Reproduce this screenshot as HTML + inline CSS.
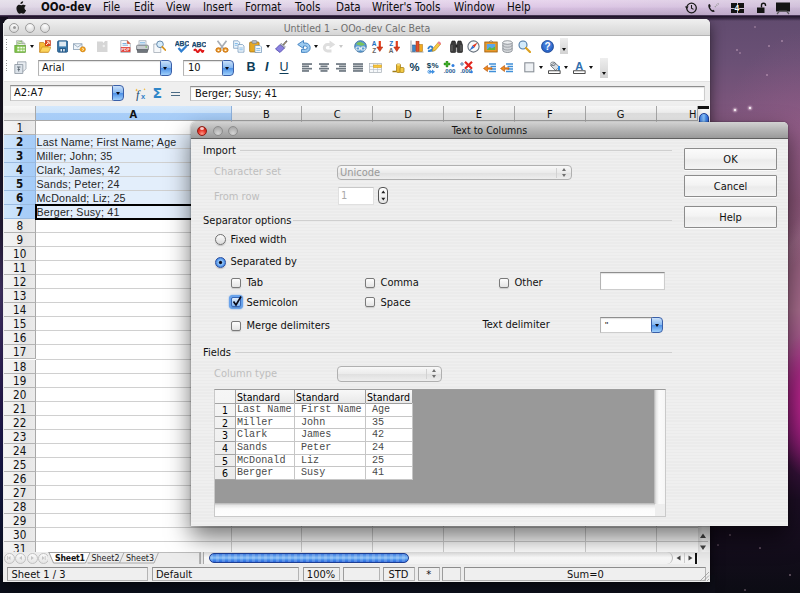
<!DOCTYPE html>
<html>
<head>
<meta charset="utf-8">
<title>Text to Columns</title>
<style>
*{box-sizing:border-box;margin:0;padding:0}
html,body{width:800px;height:593px;overflow:hidden}
body{position:relative;font-family:"DejaVu Sans Condensed","Liberation Sans",sans-serif;font-size:11px;color:#111;background:#120e1c}
.a{position:absolute;white-space:nowrap}
#desk{position:absolute;left:0;top:0;width:800px;height:593px;
 background:
  linear-gradient(128deg,rgba(255,255,255,0) 0,rgba(255,255,255,0) 762px,rgba(255,240,250,.07) 775px,rgba(255,255,255,0) 790px),
  radial-gradient(ellipse 90px 120px at 810px 150px, rgba(170,100,150,.38), rgba(150,90,140,0) 100%),
  radial-gradient(ellipse 38px 75px at 812px 405px, rgba(205,40,150,.95), rgba(175,32,132,.6) 55%, rgba(120,26,100,0) 100%),
  linear-gradient(180deg,#5d496c 0px,#6a5075 60px,#85587f 130px,#80506f 200px,#96607f 260px,#a86c8d 310px,#a4508c 355px,#8e2478 395px,#6c1a66 430px,#3c123e 462px,#1c0e24 500px,#0c0c14 593px)}
#deskL{position:absolute;left:0;top:17px;width:8px;height:576px;background:linear-gradient(180deg,#151320 0,#1a1528 130px,#2a2040 215px,#4a3a72 275px,#3c2c68 325px,#2a1c58 385px,#1c1a55 435px,#141a45 485px,#0c1428 545px,#0a0e18 576px)}
#deskB{position:absolute;left:0;top:575px;width:715px;height:18px;background:linear-gradient(90deg,#0a0e1a 0,#0c1220 300px,#0e0e18 715px)}
#menubar{position:absolute;left:0;top:0;width:800px;height:15.500px;
 background:linear-gradient(90deg,rgba(228,226,232,.55) 0,rgba(225,218,230,.3) 30%,rgba(226,190,232,.35) 70%,rgba(190,170,200,.35) 100%),linear-gradient(180deg,#ebe2f0 0,#dccde5 45%,#cdbcd8 58%,#bba9c7 100%);
 border-bottom:1px solid #4a3858;font-size:11.5px}
#menubar span{position:absolute;top:0.300px;line-height:14px;color:#0c0c0c;white-space:nowrap}
#mbshadow{position:absolute;left:0;top:15.500px;width:800px;height:5px;background:linear-gradient(180deg,rgba(20,10,30,.85),rgba(20,10,30,.5) 50%,rgba(20,10,30,0))}
#win{position:absolute;left:4px;top:19px;width:706px;height:563px;background:#fff;border-radius:5px 5px 0 0;box-shadow:0 5px 14px rgba(0,0,0,.6),0 0 1px rgba(0,0,0,.6)}
#winin{position:absolute;left:0;top:0;width:706px;height:563px;overflow:hidden;border-radius:5px 5px 0 0}
#wtitle{position:absolute;left:0;top:0;width:706px;height:16.500px;background:linear-gradient(180deg,#f0f0f0,#d6d6d6);
 border-bottom:1px solid #b4b4b4;text-align:center;line-height:18px;color:#707070;font-size:10.5px}
.tl{position:absolute;width:10px;height:10px;border-radius:50%;border:1px solid #9c9c9c;background:radial-gradient(circle at 50% 25%,#fdfdfd,#d0d0d0)}
.tlg{position:absolute;width:10px;height:10px;border-radius:50%;border:1px solid #8e8e8e;background:radial-gradient(circle at 50% 80%,#d4d4d4,#9e9e9e)}
.tlr{position:absolute;width:10px;height:10px;border-radius:50%;border:1px solid #8e1c14;background:radial-gradient(circle at 50% 85%,#ff9a8a 0,#e8392c 45%,#b5160f 100%)}
.tlr:after{content:"";position:absolute;left:2px;top:0.5px;width:4px;height:3px;border-radius:50%;background:rgba(255,255,255,.75)}
#tools{position:absolute;left:0;top:17px;width:706px;height:45px;background:#fff}
#fbar{position:absolute;left:0;top:62px;width:706px;height:25px;background:#efefef;border-top:1px solid #e2e2e2}
.ibox{position:absolute;background:#fff;border:1px solid #cdcdcd;border-top:1px solid #8e8e8e;border-left-color:#b4b4b4;box-shadow:inset 0 1px 1px rgba(0,0,0,.12);font-size:11px;line-height:13px;padding-left:4px;white-space:nowrap;overflow:hidden}
.cb{position:absolute;width:12px;height:16px;border-radius:1.500px 4px 4px 1.500px;border:1px solid #3a5fa8;
 background:linear-gradient(180deg,#c9e0fa 0,#86b8f0 48%,#4d90e6 52%,#9fd0fb 100%)}
.cb:after{content:"";position:absolute;left:2.5px;top:6px;border:2.5px solid transparent;border-top:3.5px solid #0a0a14;border-bottom:0}
.ic{position:absolute;width:14px;height:14px}
.dd{position:absolute;width:0;height:0;border:2.5px solid transparent;border-top:3px solid #111;border-bottom:0}
.grip{position:absolute;width:1px;height:13px;background:repeating-linear-gradient(180deg,#999 0,#999 1px,transparent 1px,transparent 2.6px)}
.ovf{position:absolute;width:8px;background:linear-gradient(180deg,#eee,#d2d2d2)}
.ovf:after{content:"";position:absolute;left:1.5px;bottom:2.5px;border:2.5px solid transparent;border-top:3px solid #111;border-bottom:0}
/* grid */
#grid{position:absolute;left:0;top:87px;width:706px;height:446px;background:#fff;overflow:hidden}
.ch{position:absolute;top:0;height:15px;background:linear-gradient(180deg,#f7f7f7 0,#efefef 50%,#e2e2e2 52%,#ebebeb 100%);border-right:1px solid #a8a8a8;border-bottom:1px solid #a8a8a8;text-align:center;font-size:11px;line-height:17px}
.rh{position:absolute;left:0;width:31.500px;padding-left:1px;background:linear-gradient(90deg,#f4f4f4 0,#efefef 50%,#e4e4e4 52%,#ebebeb 100%);border-right:1px solid #a8a8a8;border-bottom:1px solid #b4b4b4;text-align:center;font-size:11.600px}
.hl{position:absolute;background:#d0d0d0}
.vl{position:absolute;background:#d0d0d0;width:1px}
.ct{position:absolute;left:32.500px;font-family:"Liberation Sans",sans-serif;font-size:10.700px;letter-spacing:.22px;color:#262626;white-space:nowrap;margin-top:-.5px}
/* dialog */
#dlg{position:absolute;left:191px;top:122px;width:597px;height:404px;border-radius:5px 5px 0 0;
 box-shadow:0 11px 24px rgba(0,0,0,.55),0 0 2px rgba(0,0,0,.5);
 background:repeating-linear-gradient(180deg,#efefef 0,#efefef 1.6px,#ebebeb 1.6px,#ebebeb 3.125px)}
#dtitle{position:absolute;left:0;top:0;width:597px;height:16.5px;border-radius:5px 5px 0 0;background:linear-gradient(180deg,#d2d2d2 0,#b4b4b4 50%,#9a9a9a 100%);
 border-bottom:1px solid #5f5f5f;text-align:center;line-height:17.500px;font-size:10.5px;color:#141414}
.lb{position:absolute;white-space:nowrap;font-size:11px;line-height:13px;color:#111}
.dis{color:#bebebe}
.sep{position:absolute;height:1px;background:#cfcfcf;border-bottom:0}
.btn{position:absolute;left:493px;width:93px;height:22px;border:1px solid #8c8c8c;border-radius:1px;background:linear-gradient(180deg,#fbfbfb 0,#f3f3f3 45%,#ebebeb 55%,#f3f3f3 100%);
 text-align:center;line-height:21.500px;font-size:11px;box-shadow:0 1px 0 rgba(255,255,255,.8)}
.chk{position:absolute;width:10px;height:10px;border:1px solid #7a7a7a;border-radius:2px;background:linear-gradient(180deg,#fdfdfd,#e4e4e4);box-shadow:0 1px 1px rgba(0,0,0,.15)}
.rad{position:absolute;width:11px;height:11px;border:1px solid #707070;border-radius:50%;background:linear-gradient(180deg,#fbfbfb,#dcdcdc);box-shadow:0 1px 1px rgba(0,0,0,.18)}
.pop{position:absolute;height:15.500px;border:1px solid #b0b0b0;border-radius:4px;background:linear-gradient(180deg,#f8f8f8 0,#ebebeb 50%,#e0e0e0 52%,#eeeeee 100%);font-size:11px;line-height:14px;padding-left:2px;color:#9a9a9a}
.pop i{position:absolute;right:14px;top:2px;width:1px;height:10px;background:#d2d2d2}
.pop b{position:absolute;right:5.500px;width:0;height:0;border:2px solid transparent}
.pop b.u{top:2px;border-bottom:3px solid #6f6f6f;border-top:0}
.pop b.d{top:8px;border-top:3px solid #6f6f6f;border-bottom:0}
#pv{position:absolute;left:23px;top:267px;width:452px;height:127.500px;background:#fff;border:1px solid #c9c9c9;border-top-color:#9c9c9c}
#pvg{position:absolute;left:0;top:0;width:440px;height:114px;background:#999}
.pc{position:absolute;background:#fff;border-right:1px solid #c4c4c4;border-bottom:1px solid #c4c4c4;font-family:"Liberation Mono",monospace;font-size:10.100px;line-height:11.5px;color:#4a4a4a;white-space:nowrap;overflow:hidden}
.ph{position:absolute;background:linear-gradient(180deg,#f6f6f6,#e6e6e6);border-right:1px solid #999;border-bottom:1px solid #999;font-size:10.5px;line-height:11.5px;white-space:nowrap;overflow:hidden;color:#000}
</style>
</head>
<body>
<div id="desk"></div><div id="deskL"></div><div id="deskB"></div>
<div class="a" style="left:733.6px;top:108.6px;width:2.8px;height:2.8px;border-radius:50%;background:#fff;box-shadow:0 0 2px 1px rgba(255,230,245,.7)"></div>
<div class="a" style="left:749px;top:107px;width:2px;height:2px;border-radius:50%;background:#fff;box-shadow:0 0 2px 1px rgba(255,230,245,.7)"></div>
<div class="a" style="left:736.2px;top:49.2px;width:1.6px;height:1.6px;border-radius:50%;background:rgba(255,215,235,0.35)"></div>
<div class="a" style="left:768.2px;top:45.2px;width:1.6px;height:1.6px;border-radius:50%;background:rgba(255,215,235,0.35)"></div>
<div class="a" style="left:781.3px;top:40.3px;width:1.4px;height:1.4px;border-radius:50%;background:rgba(255,215,235,0.35)"></div>
<div class="a" style="left:739.3px;top:52.3px;width:1.4px;height:1.4px;border-radius:50%;background:rgba(255,215,235,0.28)"></div>
<div class="a" style="left:766.3px;top:74.3px;width:1.4px;height:1.4px;border-radius:50%;background:rgba(255,215,235,0.35)"></div>
<div class="a" style="left:782.2px;top:309.2px;width:1.6px;height:1.6px;border-radius:50%;background:rgba(255,215,235,0.35)"></div>
<div class="a" style="left:754.3px;top:26.3px;width:1.4px;height:1.4px;border-radius:50%;background:rgba(255,215,235,0.28)"></div>
<div class="a" style="left:744.2px;top:589.2px;width:1.6px;height:1.6px;border-radius:50%;background:rgba(255,215,235,0.28)"></div>
<div class="a" style="left:729.3px;top:534.3px;width:1.4px;height:1.4px;border-radius:50%;background:rgba(255,215,235,0.28)"></div>
<div class="a" style="left:759.4px;top:547.4px;width:1.2px;height:1.2px;border-radius:50%;background:rgba(255,215,235,0.28)"></div>
<div class="a" style="left:789.3px;top:574.3px;width:1.4px;height:1.4px;border-radius:50%;background:rgba(255,215,235,0.35)"></div>
<div class="a" style="left:764.4px;top:519.4px;width:1.2px;height:1.2px;border-radius:50%;background:rgba(255,215,235,0.28)"></div>
<div class="a" style="left:717.4px;top:544.4px;width:1.2px;height:1.2px;border-radius:50%;background:rgba(255,215,235,0.21)"></div>
<div id="menubar">
<svg class="a" style="left:15px;top:1px" width="12" height="14" viewBox="0 0 12 14"><path d="M8.1 0.2c.1.9-.3 1.6-.7 2.1-.5.5-1.2.9-1.9.8-.1-.8.3-1.6.7-2 .5-.5 1.300-.9 1.900-.9zM10.800 4.800c-.8.5-1.300 1.200-1.300 2.200 0 1.100.7 2 1.600 2.300-.2.700-.6 1.400-1 2-.5.700-1 1.400-1.800 1.400s-1-.5-1.900-.5-1.200.5-1.900.5c-.8 0-1.400-.8-1.900-1.500-1-1.500-1.700-4.100-.7-5.900.5-.9 1.400-1.500 2.400-1.500.800 0 1.500.5 1.900.5s1.300-.6 2.300-.5c.4 0 1.500.2 2.300 1z" fill="#161616"/></svg>
<span style="left:41px;font-weight:bold">OOo-dev</span>
<span style="left:103px">File</span>
<span style="left:134px">Edit</span>
<span style="left:166px">View</span>
<span style="left:203px">Insert</span>
<span style="left:245px">Format</span>
<span style="left:295px">Tools</span>
<span style="left:336px">Data</span>
<span style="left:372px">Writer's Tools</span>
<span style="left:454px">Window</span>
<span style="left:507px">Help</span>
<svg class="a" style="left:684px;top:1px" width="14" height="14" viewBox="0 0 14 14"><circle cx="7.500" cy="7" r="4.800" fill="none" stroke="#1a1a1a" stroke-width="1.300"/><path d="M7.500 4v3.200l2 1.200" fill="none" stroke="#1a1a1a" stroke-width="1.100"/><path d="M0.800 5.500l2 2.600 1.900-2.600z" fill="#1a1a1a"/></svg>
<svg class="a" style="left:706px;top:1px" width="16" height="14" viewBox="0 0 16 14"><path d="M2.500 3.500c-.8 1.500.2 4.500 2.500 6.500 1.500 1.300 3 1.300 3.800.3l-1.500-1.600-1 .5c-1-.5-2-2-2.300-3.200l.8-.7-1-2.200z" fill="#1a1a1a"/><path d="M9 6l4-4" stroke="#999" stroke-width="1.500" stroke-dasharray="1 1"/></svg>
<div class="a" style="left:731px;top:3px;width:13px;height:10px;background:#141414"></div><div class="a" style="left:737px;top:3px;width:1px;height:10px;background:#cfc4d6"></div><div class="a" style="left:731px;top:7.500px;width:13px;height:1px;background:#cfc4d6"></div><div class="a" style="left:734.500px;top:2px;font-size:8.500px;line-height:12px;font-weight:bold;color:#fff;font-family:'Liberation Sans',sans-serif;text-shadow:0 0 1px #000,0 0 1px #000">4</div>
<svg class="a" style="left:755px;top:1px" width="12" height="14" viewBox="0 0 12 14"><rect x="2" y="6.500" width="7.500" height="5.500" fill="#141414"/><path d="M6.500 6.500v-2.200a2 2 0 0 1 4 0v.7" fill="none" stroke="#141414" stroke-width="1.400"/></svg>
<svg class="a" style="left:775px;top:2px" width="16" height="13" viewBox="0 0 16 13"><rect x="1.500" y="1" width="13" height="8" fill="#141414" stroke="#141414"/><path d="M2 12l2.500-3h7l2.500 3" fill="none" stroke="#555" stroke-width="1.200"/></svg>
</div><div id="mbshadow"></div>
<div id="win"><div class="a" style="left:-1px;top:4px;width:2px;height:559px;background:#ececec"></div><div id="winin">
<div id="wtitle">Untitled 1 – OOo-dev Calc Beta</div>
<div class="tl" style="left:5px;top:3.500px"></div><div class="tl" style="left:20.500px;top:3.500px"></div><div class="tl" style="left:36px;top:3.500px"></div>
<div class="a" style="left:8.500px;top:7px;width:3px;height:3px;border-radius:50%;background:#9a9a9a"></div>
<div id="tools">
<div class="grip" style="left:2px;top:3px"></div><div class="grip" style="left:2px;top:24px"></div>
<svg class="a" style="left:10px;top:3.6000000000000014px" width="12" height="13" viewBox="0 0 12 13"><path d="M2.500.6h5.500l3 3v3h-8.500z" fill="#eef1ee" stroke="#9aa39a" stroke-width=".6"/><path d="M3 2.300l5-1M3 4l7-1.300" stroke="#7fb85a" stroke-width=".9"/><path d="M8 .6v3h3" fill="#cfd5cf" stroke="#8d968d" stroke-width=".5"/><rect x=".8" y="5.300" width="10.700" height="7.200" fill="#7fc148" stroke="#5a9a30" stroke-width=".6"/><path d="M3.300 6.800h2.200v1.700h-2.200zM6.300 6.800h2.200v1.700h-2.200zM9.200 6.800h1.600v1.700h-1.600zM3.300 9.600h2.200v1.700h-2.200zM6.300 9.600h2.200v1.700h-2.200zM9.200 9.600h1.600v1.700h-1.600z" fill="#f4fbee"/></svg>
<div class="dd" style="left:25.5px;top:9.100000000000001px;border-top-color:#111"></div>
<svg class="a" style="left:35px;top:3.6000000000000014px" width="12" height="13" viewBox="0 0 12 13"><path d="M.6 2.500h4l1 1.300h3.500v8.400h-8.500z" fill="#f6bd3a" stroke="#c07a18" stroke-width=".7"/><rect x="6.200" y=".5" width="5.400" height="5.400" fill="#e2481e" stroke="#a82a0c" stroke-width=".4"/><path d="M7 5l2.500-2.500M8 1.800h2.200v2.200" fill="none" stroke="#fff3e0" stroke-width="1"/><path d="M.8 12.200l2.200-5.200h9l-2.400 5.200z" fill="#fcd45c" stroke="#c58a1d" stroke-width=".6"/></svg>
<svg class="a" style="left:53px;top:3.6000000000000014px" width="11" height="13" viewBox="0 0 11 13"><rect x=".6" y=".8" width="10" height="11.400" rx="1.200" fill="#3a79ab" stroke="#1f4f7c" stroke-width=".8"/><rect x="2.200" y="1.600" width="6.800" height="4.800" fill="#dfe9f1"/><rect x="2.400" y="8" width="6.400" height="4" fill="#245a8a"/><rect x="3.500" y="9" width="1.500" height="2.400" fill="#eef3f8"/><rect x="6.200" y="9" width="1.500" height="2.400" fill="#eef3f8"/></svg>
<svg class="a" style="left:69px;top:3.6000000000000014px" width="13" height="13" viewBox="0 0 13 13"><rect x=".5" y="3.800" width="8.500" height="5.800" fill="#eef4fa" stroke="#7c93aa" stroke-width=".7"/><path d="M.8 4.100l4 3 4-3" fill="none" stroke="#7c93aa" stroke-width=".7"/><circle cx="9.800" cy="9.300" r="2.600" fill="#f3a21c" stroke="#b96f08" stroke-width=".5"/><path d="M6.800 9.300h4" stroke="#f3a21c" stroke-width="2"/><path d="M9 8l2 1.300-2 1.300" fill="none" stroke="#fff6e0" stroke-width=".7"/></svg>
<svg class="a" style="left:92px;top:3.6000000000000014px" width="12" height="13" viewBox="0 0 12 13"><path d="M1 1.500h5.500l1 1.500 1.500-2h2.500v11h-10.500z" fill="#d6d6d6"/><circle cx="7.800" cy="6" r="1.200" fill="#efefef"/></svg>
<svg class="a" style="left:116px;top:3.6000000000000014px" width="11" height="13" viewBox="0 0 11 13"><path d="M.8.500h6.500l3 3v9h-9.500z" fill="#fbfbfb" stroke="#9aa3ad" stroke-width=".7"/><path d="M2.500 3.500h4M2.500 5.200h5.500" stroke="#5fa1d8" stroke-width=".8"/><rect x=".8" y="7.200" width="9.500" height="4.600" fill="#dc2a22"/><path d="M7.300.5v3h3" fill="#e4552f" stroke="#c4381f" stroke-width=".5"/><text x="5.500" y="11.200" font-size="4.200" font-weight="bold" fill="#fff" text-anchor="middle" font-family="Liberation Sans,sans-serif">PDF</text></svg>
<svg class="a" style="left:132px;top:3.6000000000000014px" width="13" height="13" viewBox="0 0 13 13"><rect x="3" y=".8" width="7" height="5" fill="#f4f8fb" stroke="#8892a0" stroke-width=".6"/><path d="M4 2.500h5M4 4h5" stroke="#73b0e0" stroke-width=".7"/><rect x=".6" y="5.200" width="11.800" height="5.200" rx="1" fill="#c8ccd0" stroke="#5e646b" stroke-width=".7"/><rect x="1.500" y="9.500" width="10" height="3" fill="#6f757c" stroke="#44494f" stroke-width=".5"/><rect x="9.500" y="6.500" width="1.500" height="1" fill="#65c33a"/></svg>
<svg class="a" style="left:149px;top:3.6000000000000014px" width="13" height="13" viewBox="0 0 13 13"><path d="M.8 4h5.500l1.500 1.500v7h-7z" fill="#f6f8fa" stroke="#98a2ad" stroke-width=".7"/><circle cx="7" cy="4.300" r="3.300" fill="#d6ecfb" stroke="#5a7fa3" stroke-width=".9"/><path d="M9.300 6.800l3 3.200" stroke="#d9951c" stroke-width="1.800" stroke-linecap="round"/></svg>
<svg class="a" style="left:171px;top:3.6000000000000014px" width="14" height="13" viewBox="0 0 14 13"><text x="7" y="5.800" font-size="6.800" font-weight="bold" fill="#174a70" stroke="#174a70" stroke-width=".25" text-anchor="middle" font-family="Liberation Sans,sans-serif">ABC</text><path d="M3.500 8l2.800 3.300 5.200-5.300" fill="none" stroke="#2f7fd0" stroke-width="2.200"/></svg>
<svg class="a" style="left:188px;top:3.6000000000000014px" width="14" height="13" viewBox="0 0 14 13"><text x="7" y="7.300" font-size="6.800" font-weight="bold" fill="#174a70" stroke="#174a70" stroke-width=".25" text-anchor="middle" font-family="Liberation Sans,sans-serif">ABC</text><path d="M2 10.800q1.200-2.500 2.500 0t2.500 0 2.500 0 2-.8" fill="none" stroke="#e01818" stroke-width="2"/></svg>
<svg class="a" style="left:211px;top:3.6000000000000014px" width="14" height="13" viewBox="0 0 14 13"><path d="M2.500 .8l6 8M11.500 .8l-6 8" stroke="#a8aeb6" stroke-width="1.700"/><ellipse cx="3.500" cy="10" rx="2.600" ry="2.200" fill="#f0a030" stroke="#c8700c" stroke-width="1"/><ellipse cx="10.500" cy="10" rx="2.600" ry="2.200" fill="#f0a030" stroke="#c8700c" stroke-width="1"/><ellipse cx="3.500" cy="10.200" rx="1" ry=".8" fill="#fff"/><ellipse cx="10.500" cy="10.200" rx="1" ry=".8" fill="#fff"/></svg>
<svg class="a" style="left:229px;top:3.6000000000000014px" width="12" height="13" viewBox="0 0 12 13"><path d="M.6.800h4.500l1.500 1.500v6h-6z" fill="#eaf3fb" stroke="#6f93b8" stroke-width=".7"/><path d="M5 4.500h4.500l1.500 1.500v6.200h-6z" fill="#f3f8fc" stroke="#6f93b8" stroke-width=".7"/><path d="M1.800 3.500h3M1.800 5.300h2.500M6.300 8h3.500M6.300 9.800h3.500" stroke="#6aaee6" stroke-width=".8"/></svg>
<svg class="a" style="left:245px;top:3.6000000000000014px" width="14" height="13" viewBox="0 0 14 13"><rect x=".6" y="2" width="9.500" height="10" rx="1" fill="#e6a824" stroke="#9c6a0c" stroke-width=".7"/><rect x="3" y=".6" width="4.800" height="2.800" rx=".8" fill="#b9bec5" stroke="#70767e" stroke-width=".6"/><path d="M6 5.500h5l1.500 1.500v5.500h-6.500z" fill="#f3f8fc" stroke="#6f93b8" stroke-width=".7"/><path d="M7.300 8.500h4M7.300 10.300h4" stroke="#6aaee6" stroke-width=".8"/></svg>
<div class="dd" style="left:262.0px;top:9.100000000000001px;border-top-color:#111"></div>
<svg class="a" style="left:271px;top:3.6000000000000014px" width="13" height="13" viewBox="0 0 13 13"><path d="M12 .8l-4.500 5" stroke="#3a3f55" stroke-width="1.400"/><path d="M11.500 1.500l-3 3.300" stroke="#e9c46a" stroke-width=".7"/><path d="M5 4.500l4.500 3.500-4.500 4.500-4.500-3.500z" fill="#8a82e0" stroke="#4b43a8" stroke-width=".8"/><path d="M5.200 4.300l4.300 3.500 1-1-4.300-3.500z" fill="#c6cad2" stroke="#666c78" stroke-width=".5"/></svg>
<svg class="a" style="left:293px;top:3.6000000000000014px" width="14" height="13" viewBox="0 0 14 13"><path d="M6.500 .5v2.500h2a4.700 4.700 0 0 1 0 9.400h-4v-3h4a1.700 1.700 0 0 0 0-3.400h-2v2.500l-5.800-4z" fill="#9ccaf0" stroke="#3b7dbd" stroke-width=".9"/></svg>
<div class="dd" style="left:310.0px;top:9.100000000000001px;border-top-color:#111"></div>
<svg class="a" style="left:318px;top:3.6000000000000014px" width="14" height="13" viewBox="0 0 14 13"><path d="M7.500 .5v2.500h-2a4.700 4.700 0 0 0 0 9.400h4v-3h-4a1.700 1.700 0 0 1 0-3.400h2v2.500l5.800-4z" fill="#dedede"/></svg>
<div class="dd" style="left:335.0px;top:9.100000000000001px;border-top-color:#c8c8c8"></div>
<svg class="a" style="left:350px;top:3.6000000000000014px" width="13" height="13" viewBox="0 0 13 13"><circle cx="6.500" cy="6.500" r="5.800" fill="#5d9fd6" stroke="#2c5f91" stroke-width=".8"/><path d="M2 4q2-2.500 4.500-2t4.500 2.500q-2 1.500-4.500 1t-4.500-1.500z" fill="#7cc35a"/><rect x="2" y="7" width="4" height="3" rx="1" fill="none" stroke="#e9eef2" stroke-width="1.100"/><rect x="7" y="7" width="4" height="3" rx="1" fill="none" stroke="#e9eef2" stroke-width="1.100"/><path d="M5 8.500h3" stroke="#e9eef2" stroke-width="1"/></svg>
<svg class="a" style="left:367px;top:3.6000000000000014px" width="13" height="13" viewBox="0 0 13 13"><text x="3.200" y="5.800" font-size="6.500" font-weight="bold" fill="#1c6fc0" text-anchor="middle" font-family="Liberation Sans,sans-serif">A</text><text x="3.200" y="12.500" font-size="6.500" font-weight="bold" fill="#666" text-anchor="middle" font-family="Liberation Sans,sans-serif">Z</text><path d="M8.800 1v7" stroke="#e2401e" stroke-width="2.200"/><path d="M5.800 7h6l-3 4.500z" fill="#e2401e" stroke="#9c230c" stroke-width=".5"/></svg>
<svg class="a" style="left:384px;top:3.6000000000000014px" width="13" height="13" viewBox="0 0 13 13"><text x="3.200" y="5.800" font-size="6.500" font-weight="bold" fill="#1c6fc0" text-anchor="middle" font-family="Liberation Sans,sans-serif">Z</text><text x="3.200" y="12.500" font-size="6.500" font-weight="bold" fill="#666" text-anchor="middle" font-family="Liberation Sans,sans-serif">A</text><path d="M8.800 1v7" stroke="#e2401e" stroke-width="2.200"/><path d="M5.800 7h6l-3 4.500z" fill="#e2401e" stroke="#9c230c" stroke-width=".5"/></svg>
<svg class="a" style="left:406px;top:3.6000000000000014px" width="14" height="13" viewBox="0 0 14 13"><path d="M1 .5v11.500h12.500" fill="none" stroke="#8d949c" stroke-width=".9"/><rect x="2.500" y="5" width="3" height="6.500" fill="#3d86c8" stroke="#1e5288" stroke-width=".5"/><rect x="6" y="1.200" width="3" height="10.300" fill="#e2522a" stroke="#9c2a10" stroke-width=".5"/><rect x="9.500" y="4.500" width="3" height="7" fill="#f2aa20" stroke="#a86a06" stroke-width=".5"/></svg>
<svg class="a" style="left:423px;top:3.6000000000000014px" width="14" height="13" viewBox="0 0 14 13"><path d="M1 9q2-4 4-2t-2 3.500 4.500-.5" fill="none" stroke="#2f7fd0" stroke-width="1.800"/><path d="M6 8.500l5.500-6.500 2.300 1.900-5.500 6.500-3 .9z" fill="#f6c944" stroke="#b98512" stroke-width=".6"/><path d="M11.300 2.200l2.300 1.900" stroke="#ee7f92" stroke-width="2.200"/></svg>
<svg class="a" style="left:446px;top:3.6000000000000014px" width="13" height="13" viewBox="0 0 13 13"><path d="M2 1h3l.8 2.500v8a1 1 0 0 1-1 1h-3.300a1 1 0 0 1-1-1v-6.500zM11 1h-3l-.8 2.500v8a1 1 0 0 0 1 1h3.300a1 1 0 0 0 1-1v-6.500z" fill="#3a3a3a" stroke="#161616" stroke-width=".6"/><rect x="5.500" y="4.500" width="2" height="3" fill="#222"/><path d="M2 5v6M11 5v6" stroke="#777" stroke-width=".8"/></svg>
<svg class="a" style="left:463px;top:3.6000000000000014px" width="13" height="13" viewBox="0 0 13 13"><circle cx="6.500" cy="6.500" r="5.600" fill="#f7f9fb" stroke="#68727d" stroke-width="1.100"/><path d="M10.500 2.500l-3 5-2-2z" fill="#e2361e"/><path d="M2.500 10.500l3-5 2 2z" fill="#2f6fd0"/></svg>
<svg class="a" style="left:480px;top:3.6000000000000014px" width="14" height="13" viewBox="0 0 14 13"><rect x=".8" y="2" width="12.400" height="10" fill="#e9992a" stroke="#9c5a08" stroke-width=".8"/><rect x="2.800" y="4" width="8.400" height="6" fill="#5aa6e8"/><path d="M2.800 10l3-3 2 1.500 3.400-2v3.500z" fill="#5fb83c"/><path d="M5 2l2-1.600 2 1.600" fill="none" stroke="#666" stroke-width=".6"/></svg>
<svg class="a" style="left:498px;top:3.6000000000000014px" width="11" height="13" viewBox="0 0 11 13"><path d="M.8 2.500v8c0 1 2 2 4.700 2s4.700-1 4.700-2v-8" fill="#d4d7da" stroke="#70767d" stroke-width=".7"/><ellipse cx="5.500" cy="2.500" rx="4.700" ry="1.800" fill="#eef0f2" stroke="#70767d" stroke-width=".7"/><path d="M.8 5.200c0 1 2 2 4.700 2s4.700-1 4.700-2M.8 8c0 1 2 2 4.700 2s4.700-1 4.700-2" fill="none" stroke="#868c93" stroke-width=".7"/></svg>
<svg class="a" style="left:514px;top:3.6000000000000014px" width="13" height="13" viewBox="0 0 13 13"><circle cx="5" cy="5" r="4" fill="#d3ebfc" stroke="#4d78a4" stroke-width="1.100"/><path d="M8 8l4 4" stroke="#dca020" stroke-width="2.200" stroke-linecap="round"/></svg>
<svg class="a" style="left:537px;top:3.6000000000000014px" width="13" height="13" viewBox="0 0 13 13"><circle cx="6.500" cy="6.500" r="6" fill="#2c66c8" stroke="#163f8c" stroke-width=".8"/><circle cx="6.500" cy="5" r="4.500" fill="#4c86de" opacity=".6"/><text x="6.500" y="10.200" font-size="10" font-weight="bold" fill="#fff" text-anchor="middle" font-family="Liberation Sans,sans-serif">?</text></svg>
<div class="ovf" style="left:556px;top:2px;height:15.500px"></div>
<svg class="a" style="left:10px;top:24.700000000000003px" width="13" height="13" viewBox="0 0 13 13"><path d="M3.500.8h8.500v7l-2.500 2.500h-6z" fill="#e9edf1" stroke="#8e98a3" stroke-width=".7"/><path d="M.8 3.500h8v9h-8z" fill="#dbe2e9" stroke="#7e8893" stroke-width=".7"/><path d="M3 6h3.500M4.700 6v4.500M3.500 8.500h2.500" stroke="#5b6672" stroke-width=".9" fill="none"/></svg>
<div class="ibox" style="left:34px;top:24px;width:123px;height:16px;line-height:14px;font-size:11px;padding-left:3px">Arial</div><div class="cb" style="left:155.5px;top:23.5px"></div>
<div class="ibox" style="left:179px;top:24px;width:40px;height:16px;line-height:14px;font-size:11px">10</div><div class="cb" style="left:217.5px;top:23.5px"></div>
<div class="a" style="left:242.5px;top:23.200000000000003px;font-family:'Liberation Sans',sans-serif;font-size:12.5px;line-height:16px;color:#0c3c58;font-weight:bold">B</div>
<div class="a" style="left:261px;top:23.200000000000003px;font-family:'Liberation Sans',sans-serif;font-size:12.5px;line-height:16px;color:#0c3c58;font-weight:bold;font-style:italic">I</div>
<div class="a" style="left:275.5px;top:23.200000000000003px;font-family:'Liberation Sans',sans-serif;font-size:12.5px;line-height:16px;color:#0c3c58;text-decoration:underline;text-decoration-thickness:1px;text-underline-offset:1.500px">U</div>
<svg class="a" style="left:298px;top:25.700000000000003px" width="10" height="11" viewBox="0 0 10 11"><rect x="0" y="1.2" width="10" height="1.700" fill="#6d7780"/><rect x="0" y="3.5" width="7" height="1.700" fill="#6d7780"/><rect x="0" y="5.8" width="10" height="1.700" fill="#6d7780"/><rect x="0" y="8.1" width="7" height="1.700" fill="#6d7780"/></svg>
<svg class="a" style="left:315px;top:25.700000000000003px" width="10" height="11" viewBox="0 0 10 11"><rect x="0.0" y="1.2" width="10" height="1.700" fill="#6d7780"/><rect x="1.5" y="3.5" width="7" height="1.700" fill="#6d7780"/><rect x="0.0" y="5.8" width="10" height="1.700" fill="#6d7780"/><rect x="1.5" y="8.1" width="7" height="1.700" fill="#6d7780"/></svg>
<svg class="a" style="left:332px;top:25.700000000000003px" width="10" height="11" viewBox="0 0 10 11"><rect x="0" y="1.2" width="10" height="1.700" fill="#6d7780"/><rect x="3" y="3.5" width="7" height="1.700" fill="#6d7780"/><rect x="0" y="5.8" width="10" height="1.700" fill="#6d7780"/><rect x="3" y="8.1" width="7" height="1.700" fill="#6d7780"/></svg>
<svg class="a" style="left:349px;top:25.700000000000003px" width="10" height="11" viewBox="0 0 10 11"><rect x="0" y="1.2" width="10" height="1.700" fill="#6d7780"/><rect x="0" y="3.5" width="10" height="1.700" fill="#6d7780"/><rect x="0" y="5.8" width="10" height="1.700" fill="#6d7780"/><rect x="0" y="8.1" width="10" height="1.700" fill="#6d7780"/></svg>
<svg class="a" style="left:365px;top:26.800000000000004px" width="13" height="10" viewBox="0 0 13 10"><rect x=".5" y=".5" width="12" height="9" fill="#f6f8fa" stroke="#a6aeb6" stroke-width=".7"/><path d="M.5 3.500h12M.5 6.500h12M4.500 .5v9M8.500 .5v9" stroke="#b6bec6" stroke-width=".6"/><rect x="4.500" y="2" width="8" height="2.600" fill="#f8c63c" stroke="#d49a10" stroke-width=".5"/></svg>
<svg class="a" style="left:388px;top:26.800000000000004px" width="13" height="10" viewBox="0 0 13 10"><path d="M.5 8.500h4" stroke="#a07c18" stroke-width="1.500"/><rect x="4.500" y="1" width="4" height="8.500" rx="1" fill="#e8b82e" stroke="#9c7508" stroke-width=".7"/><rect x="8" y="4.500" width="4" height="5" rx="1" fill="#f2ca48" stroke="#9c7508" stroke-width=".7"/><ellipse cx="6.500" cy="1.800" rx="1.800" ry=".9" fill="#f8de7c"/></svg>
<div class="a" style="left:405.5px;top:23.200000000000003px;font-family:'Liberation Sans',sans-serif;font-size:11.3px;line-height:16px;color:#0c3c58;font-weight:bold">%</div>
<svg class="a" style="left:422px;top:24.700000000000003px" width="13" height="13" viewBox="0 0 13 13"><text x="3" y="6.500" font-size="8" font-weight="bold" fill="#0c3c58" text-anchor="middle" font-family="Liberation Sans,sans-serif">$</text><text x="9" y="7" font-size="8" font-weight="bold" fill="#0c3c58" text-anchor="middle" font-family="Liberation Sans,sans-serif">%</text><path d="M3 10h3v-1.500l3 2.300-3 2.200v-1.500h-3z" fill="#3f8fe0"/><circle cx="3.500" cy="10.700" r="1.600" fill="none" stroke="#3f8fe0" stroke-width=".9"/></svg>
<svg class="a" style="left:439px;top:24.700000000000003px" width="13" height="13" viewBox="0 0 13 13"><path d="M3 0h2v2h2v2h-2v2h-2v-2h-2v-2h2z" fill="#3fae2a" stroke="#1f7a10" stroke-width=".4"/><circle cx="10" cy="4.500" r="1.500" fill="#2f7fe0"/><text x="6.500" y="12.300" font-size="6" font-weight="bold" fill="#1c5a93" text-anchor="middle" font-family="Liberation Sans,sans-serif">.000</text></svg>
<svg class="a" style="left:456px;top:24.700000000000003px" width="13" height="13" viewBox="0 0 13 13"><text x="6" y="12.300" font-size="6" font-weight="bold" fill="#1c5a93" text-anchor="middle" font-family="Liberation Sans,sans-serif">.000</text><circle cx="2" cy="3" r="1.200" fill="none" stroke="#1c5a93" stroke-width=".8"/><path d="M5 .8l7 7M12 .8l-7 7" stroke="#e2261e" stroke-width="2.200"/><circle cx="11.500" cy="11" r="1.300" fill="#2f7fe0"/></svg>
<svg class="a" style="left:479px;top:25.700000000000003px" width="13" height="11" viewBox="0 0 13 11"><path d="M6 2h7M7.500 4.500h5.500M7.500 7h5.500M6 9.500h7" stroke="#3f8fd8" stroke-width="1.400"/><path d="M9 5.800h-4.500v-2.300l-4 3 4 3v-2.300h4.500z" fill="#f08a1c" stroke="#b34f08" stroke-width=".6"/></svg>
<svg class="a" style="left:496px;top:25.700000000000003px" width="13" height="11" viewBox="0 0 13 11"><path d="M6 2h7M7.500 4.500h5.500M7.500 7h5.500M6 9.500h7" stroke="#3f8fd8" stroke-width="1.400"/><path d="M9 5.800h-4.500v-2.300l-4 3 4 3v-2.300h4.500z" fill="#f08a1c" stroke="#b34f08" stroke-width=".6"/></svg>
<svg class="a" style="left:519.5px;top:26.200000000000003px" width="11.0" height="10.6" viewBox="0 0 11.0 10.6"><rect x=".8" y=".8" width="9" height="9" fill="#eef1f4" stroke="#8a9098" stroke-width="1.100"/></svg>
<div class="dd" style="left:535.0px;top:30.200000000000003px;border-top-color:#111"></div>
<svg class="a" style="left:544px;top:24.700000000000003px" width="13" height="13" viewBox="0 0 13 13"><path d="M2.500 4.500l4-3 5 4.500-4 3.500z" fill="#d9dde1" stroke="#5f6770" stroke-width=".8"/><ellipse cx="5" cy="2.800" rx="2.300" ry="1.800" fill="none" stroke="#5f6770" stroke-width=".8"/><path d="M11 5v4.500" stroke="#2f8fe8" stroke-width="2"/><rect x=".6" y="9.800" width="11.500" height="2.600" fill="#fff" stroke="#222" stroke-width=".8"/></svg>
<div class="dd" style="left:560.0px;top:30.200000000000003px;border-top-color:#111"></div>
<svg class="a" style="left:569px;top:24.700000000000003px" width="13" height="13" viewBox="0 0 13 13"><text x="6.300" y="9" font-size="11" font-weight="bold" fill="#2f6fae" text-anchor="middle" font-family="Liberation Sans,sans-serif">A</text><rect x=".6" y="9.800" width="11.500" height="2.600" fill="#fff" stroke="#222" stroke-width=".8"/></svg>
<div class="dd" style="left:585.0px;top:30.200000000000003px;border-top-color:#111"></div>
<div class="ovf" style="left:596px;top:22px;height:19.500px"></div>
</div>
<div id="fbar">
<div class="ibox" style="left:6px;top:3px;width:103px;height:16px;padding-left:3px">A2:A7</div><div class="cb" style="left:108px;top:3px"></div>
<div class="ibox" style="left:186px;top:4px;width:515px;height:15px">Berger; Susy; 41</div>
<svg class="a" style="left:130px;top:5px" width="14" height="14" viewBox="0 0 14 14"><text x="2" y="11.500" font-size="12" font-style="italic" fill="#174a6e" font-family="Liberation Serif,serif">f</text><text x="7" y="12" font-size="7.500" font-weight="bold" fill="#2f7fc8" font-family="Liberation Sans,sans-serif">x</text><path d="M2.500 1.500l.5 1.200 1.200.3-1.200.4-.5 1.200-.4-1.200-1.200-.4 1.200-.3zM10.500 1l.4 1 1 .3-1 .3-.4 1-.3-1-1-.3 1-.3z" fill="#f2b01e"/></svg>
<div class="a" style="left:148.5px;top:3px;font-size:14px;line-height:17px;font-weight:bold;color:#2f86c8;font-family:'DejaVu Sans',sans-serif">Σ</div>
<div class="a" style="left:167px;top:9.5px;width:8.500px;height:4.500px;border-top:1.300px solid #4a6a84;border-bottom:1.300px solid #4a6a84"></div>
</div>
<div id="grid">
<div class="ch" style="left:0;width:32px"></div>
<div class="ch" style="left:32px;width:195.5px;font-weight:bold;background:linear-gradient(180deg,#d4e8fc 0,#cbe3fb 50%,#a9cef8 52%,#a6ccf7 100%);border-right-color:#8fb2dd">A</div>
<div class="ch" style="left:227.5px;width:70.85000000000002px">B</div>
<div class="ch" style="left:298.35px;width:70.84999999999997px">C</div>
<div class="ch" style="left:369.2px;width:70.85000000000002px">D</div>
<div class="ch" style="left:440.05px;width:70.84999999999997px">E</div>
<div class="ch" style="left:510.9px;width:70.85000000000002px">F</div>
<div class="ch" style="left:581.75px;width:70.85000000000002px">G</div>
<div class="ch" style="left:652.6px;width:41.89999999999998px;text-align:right;padding-right:1px">H</div>
<div class="a" style="left:32px;top:29.03px;width:196px;height:84.18px;background:#e3eefb"></div>
<div class="rh" style="top:15.00px;height:14.03px;line-height:15.63px;">1</div>
<div class="hl" style="left:32px;top:28.03px;width:662px;height:1px"></div>
<div class="rh" style="top:29.03px;height:14.03px;line-height:15.63px;font-weight:bold;background:linear-gradient(90deg,#cfe5fb 0,#c6e0fb 50%,#a9cef8 52%,#a6ccf7 100%);border-bottom-color:#9bbbe0;border-right-color:#8fb2dd;">2</div>
<div class="hl" style="left:32px;top:42.06px;width:662px;height:1px"></div>
<div class="rh" style="top:43.06px;height:14.03px;line-height:15.63px;font-weight:bold;background:linear-gradient(90deg,#cfe5fb 0,#c6e0fb 50%,#a9cef8 52%,#a6ccf7 100%);border-bottom-color:#9bbbe0;border-right-color:#8fb2dd;">3</div>
<div class="hl" style="left:32px;top:56.09px;width:662px;height:1px"></div>
<div class="rh" style="top:57.09px;height:14.03px;line-height:15.63px;font-weight:bold;background:linear-gradient(90deg,#cfe5fb 0,#c6e0fb 50%,#a9cef8 52%,#a6ccf7 100%);border-bottom-color:#9bbbe0;border-right-color:#8fb2dd;">4</div>
<div class="hl" style="left:32px;top:70.12px;width:662px;height:1px"></div>
<div class="rh" style="top:71.12px;height:14.03px;line-height:15.63px;font-weight:bold;background:linear-gradient(90deg,#cfe5fb 0,#c6e0fb 50%,#a9cef8 52%,#a6ccf7 100%);border-bottom-color:#9bbbe0;border-right-color:#8fb2dd;">5</div>
<div class="hl" style="left:32px;top:84.15px;width:662px;height:1px"></div>
<div class="rh" style="top:85.15px;height:14.03px;line-height:15.63px;font-weight:bold;background:linear-gradient(90deg,#cfe5fb 0,#c6e0fb 50%,#a9cef8 52%,#a6ccf7 100%);border-bottom-color:#9bbbe0;border-right-color:#8fb2dd;">6</div>
<div class="hl" style="left:32px;top:98.18px;width:662px;height:1px"></div>
<div class="rh" style="top:99.18px;height:14.03px;line-height:15.63px;font-weight:bold;background:linear-gradient(90deg,#cfe5fb 0,#c6e0fb 50%,#a9cef8 52%,#a6ccf7 100%);border-bottom-color:#9bbbe0;border-right-color:#8fb2dd;">7</div>
<div class="hl" style="left:32px;top:112.21px;width:662px;height:1px"></div>
<div class="rh" style="top:113.21px;height:14.03px;line-height:15.63px;">8</div>
<div class="hl" style="left:32px;top:126.24px;width:662px;height:1px"></div>
<div class="rh" style="top:127.24px;height:14.03px;line-height:15.63px;">9</div>
<div class="hl" style="left:32px;top:140.27px;width:662px;height:1px"></div>
<div class="rh" style="top:141.27px;height:14.03px;line-height:15.63px;">10</div>
<div class="hl" style="left:32px;top:154.30px;width:662px;height:1px"></div>
<div class="rh" style="top:155.30px;height:14.03px;line-height:15.63px;">11</div>
<div class="hl" style="left:32px;top:168.33px;width:662px;height:1px"></div>
<div class="rh" style="top:169.33px;height:14.03px;line-height:15.63px;">12</div>
<div class="hl" style="left:32px;top:182.36px;width:662px;height:1px"></div>
<div class="rh" style="top:183.36px;height:14.03px;line-height:15.63px;">13</div>
<div class="hl" style="left:32px;top:196.39px;width:662px;height:1px"></div>
<div class="rh" style="top:197.39px;height:14.03px;line-height:15.63px;">14</div>
<div class="hl" style="left:32px;top:210.42px;width:662px;height:1px"></div>
<div class="rh" style="top:211.42px;height:14.03px;line-height:15.63px;">15</div>
<div class="hl" style="left:32px;top:224.45px;width:662px;height:1px"></div>
<div class="rh" style="top:225.45px;height:14.03px;line-height:15.63px;">16</div>
<div class="hl" style="left:32px;top:238.48px;width:662px;height:1px"></div>
<div class="rh" style="top:239.48px;height:14.03px;line-height:15.63px;">17</div>
<div class="hl" style="left:32px;top:252.51px;width:662px;height:1px"></div>
<div class="rh" style="top:253.51px;height:14.03px;line-height:15.63px;">18</div>
<div class="hl" style="left:32px;top:266.54px;width:662px;height:1px"></div>
<div class="rh" style="top:267.54px;height:14.03px;line-height:15.63px;">19</div>
<div class="hl" style="left:32px;top:280.57px;width:662px;height:1px"></div>
<div class="rh" style="top:281.57px;height:14.03px;line-height:15.63px;">20</div>
<div class="hl" style="left:32px;top:294.60px;width:662px;height:1px"></div>
<div class="rh" style="top:295.60px;height:14.03px;line-height:15.63px;">21</div>
<div class="hl" style="left:32px;top:308.63px;width:662px;height:1px"></div>
<div class="rh" style="top:309.63px;height:14.03px;line-height:15.63px;">22</div>
<div class="hl" style="left:32px;top:322.66px;width:662px;height:1px"></div>
<div class="rh" style="top:323.66px;height:14.03px;line-height:15.63px;">23</div>
<div class="hl" style="left:32px;top:336.69px;width:662px;height:1px"></div>
<div class="rh" style="top:337.69px;height:14.03px;line-height:15.63px;">24</div>
<div class="hl" style="left:32px;top:350.72px;width:662px;height:1px"></div>
<div class="rh" style="top:351.72px;height:14.03px;line-height:15.63px;">25</div>
<div class="hl" style="left:32px;top:364.75px;width:662px;height:1px"></div>
<div class="rh" style="top:365.75px;height:14.03px;line-height:15.63px;">26</div>
<div class="hl" style="left:32px;top:378.78px;width:662px;height:1px"></div>
<div class="rh" style="top:379.78px;height:14.03px;line-height:15.63px;">27</div>
<div class="hl" style="left:32px;top:392.81px;width:662px;height:1px"></div>
<div class="rh" style="top:393.81px;height:14.03px;line-height:15.63px;">28</div>
<div class="hl" style="left:32px;top:406.84px;width:662px;height:1px"></div>
<div class="rh" style="top:407.84px;height:14.03px;line-height:15.63px;">29</div>
<div class="hl" style="left:32px;top:420.87px;width:662px;height:1px"></div>
<div class="rh" style="top:421.87px;height:14.03px;line-height:15.63px;">30</div>
<div class="hl" style="left:32px;top:434.90px;width:662px;height:1px"></div>
<div class="rh" style="top:435.90px;height:14.03px;line-height:15.63px;">31</div>
<div class="hl" style="left:32px;top:448.93px;width:662px;height:1px"></div>
<div class="vl" style="left:226.5px;top:15px;height:431px"></div>
<div class="vl" style="left:297.35px;top:15px;height:431px"></div>
<div class="vl" style="left:368.2px;top:15px;height:431px"></div>
<div class="vl" style="left:439.05px;top:15px;height:431px"></div>
<div class="vl" style="left:509.9px;top:15px;height:431px"></div>
<div class="vl" style="left:580.75px;top:15px;height:431px"></div>
<div class="vl" style="left:651.6px;top:15px;height:431px"></div>
<div class="vl" style="left:693.5px;top:15px;height:431px"></div>
<div class="ct" style="top:29.03px;line-height:14.03px">Last Name; First Name; Age</div>
<div class="ct" style="top:43.06px;line-height:14.03px">Miller; John; 35</div>
<div class="ct" style="top:57.09px;line-height:14.03px">Clark; James; 42</div>
<div class="ct" style="top:71.12px;line-height:14.03px">Sands; Peter; 24</div>
<div class="ct" style="top:85.15px;line-height:14.03px">McDonald; Liz; 25</div>
<div class="ct" style="top:99.18px;line-height:14.03px">Berger; Susy; 41</div>
<div class="a" style="left:31px;top:97.68px;width:198px;height:16.53px;border:2px solid #000"></div>
<div class="a" style="left:694px;top:0;width:12px;height:446px;background:linear-gradient(90deg,#e4e4e4,#fafafa 40%,#f4f4f4)"></div>
<div class="a" style="left:694px;top:0;width:11px;height:2.500px;background:#111"></div>
<div class="a" style="left:694.500px;top:7px;width:10.500px;height:411px;border-radius:5.500px;border:1px solid #1f3f95;background:linear-gradient(90deg,#3f7fe6 0,#79b4f8 35%,#8cc4fb 50%,#4a90ee 72%,#2e6ade 100%)"></div>
<svg class="a" style="left:693px;top:425px" width="12" height="22" viewBox="0 0 12 22"><path d="M6 2.500l-3 4.500h6z" fill="#444"/><path d="M6 19l-3-4.500h6z" fill="#444"/><path d="M1 10.500h10" stroke="#aaa" stroke-width=".7"/></svg>
</div>
<div class="a" style="left:0;top:533px;width:706px;height:12px;background:#ececec"></div>
<div class="a" style="left:-0.5px;top:533.500px;width:11px;height:11px;border-radius:50%;border:1px solid #c2c2c2;background:linear-gradient(180deg,#fafafa,#e4e4e4)"></div>
<div class="a" style="left:11.0px;top:533.500px;width:11px;height:11px;border-radius:50%;border:1px solid #c2c2c2;background:linear-gradient(180deg,#fafafa,#e4e4e4)"></div>
<div class="a" style="left:22.5px;top:533.500px;width:11px;height:11px;border-radius:50%;border:1px solid #c2c2c2;background:linear-gradient(180deg,#fafafa,#e4e4e4)"></div>
<div class="a" style="left:33.5px;top:533.500px;width:11px;height:11px;border-radius:50%;border:1px solid #c2c2c2;background:linear-gradient(180deg,#fafafa,#e4e4e4)"></div>
<svg class="a" style="left:0;top:533px" width="46" height="12" viewBox="0 0 46 12"><g fill="#c4c4c4"><path d="M6.500 4l-2.500 2 2.500 2z"/><rect x="3" y="4" width=".8" height="4"/><path d="M18 4l-2.800 2 2.800 2z"/><path d="M27 4l2.800 2-2.800 2z"/><path d="M38 4l2.500 2-2.500 2z"/><rect x="40.800" y="4" width=".8" height="4"/></g></svg>
<svg class="a" style="left:44px;top:533px" width="160" height="12" viewBox="0 0 160 12"><path d="M0 0h160v12h-160z" fill="#ececec"/><path d="M39.500 11h32l4.500-10.500M71.500 11h34.500l4.500-10.500" fill="none" stroke="#9a9a9a" stroke-width=".8"/><path d="M1 0.500l4.500 10.500h32l4.500-10.500z" fill="#fff" stroke="#8c8c8c" stroke-width=".8"/><path d="M0 0.400h1M42 0.400h118" stroke="#a8a8a8" stroke-width=".8"/><path d="M151.500 0v12" stroke="#b4b4b4"/></svg>
<div class="a" style="left:51px;top:533px;font-size:8.700px;font-weight:bold;line-height:12px;letter-spacing:-.2px">Sheet1</div>
<div class="a" style="left:87.500px;top:533px;font-size:8.800px;line-height:12px;color:#222">Sheet2</div>
<div class="a" style="left:122px;top:533px;font-size:8.800px;line-height:12px;color:#222">Sheet3</div>
<div class="a" style="left:196px;top:533px;width:4px;height:12px;background:#e6e6e6;border-left:1px solid #aaa;border-right:1px solid #aaa"></div>
<div class="a" style="left:200px;top:533px;width:494px;height:12px;background:linear-gradient(180deg,#dedede,#fbfbfb 45%,#f2f2f2)"></div>
<div class="a" style="left:204.500px;top:533.600px;width:200px;height:10.600px;border-radius:5.300px;border:1px solid #1f3f95;background:repeating-linear-gradient(90deg,rgba(255,255,255,.16) 0,rgba(255,255,255,.16) 3px,rgba(255,255,255,0) 3px,rgba(255,255,255,0) 6px),linear-gradient(180deg,#3f7fe6 0,#79b4f8 35%,#8cc4fb 50%,#4a90ee 72%,#2e6ade 100%)"></div>
<div class="a" style="left:655px;top:533px;width:14px;height:12px;border-radius:0 6px 6px 0;border-right:1px solid #bdbdbd"></div>
<svg class="a" style="left:668.500px;top:533px" width="24" height="12" viewBox="0 0 24 12"><path d="M7.500 3.500l-4 2.500 4 2.500z" fill="#444"/><path d="M15.500 3.500l4 2.500-4 2.500z" fill="#444"/><path d="M11.500 1v10" stroke="#bbb" stroke-width=".7"/></svg>
<div class="a" style="left:691px;top:533.500px;width:2.200px;height:11px;background:#111"></div>
<div class="a" style="left:0;top:545px;width:706px;height:18px;background:#ececec"></div>
<div class="a" style="left:3px;top:547.500px;width:141px;height:14px;border:1px solid #b4b4b4;border-top-color:#8c8c8c;border-left-color:#9c9c9c;background:#efefef;font-size:11px;line-height:13.500px;text-align:left;padding-left:3.500px;">Sheet 1 / 3</div>
<div class="a" style="left:147.5px;top:547.500px;width:147.0px;height:14px;border:1px solid #b4b4b4;border-top-color:#8c8c8c;border-left-color:#9c9c9c;background:#efefef;font-size:11px;line-height:13.500px;text-align:left;padding-left:3.500px;">Default</div>
<div class="a" style="left:298.5px;top:547.500px;width:37.0px;height:14px;border:1px solid #b4b4b4;border-top-color:#8c8c8c;border-left-color:#9c9c9c;background:#efefef;font-size:11px;line-height:13.500px;text-align:center;">100%</div>
<div class="a" style="left:338.5px;top:547.500px;width:37.0px;height:14px;border:1px solid #b4b4b4;border-top-color:#8c8c8c;border-left-color:#9c9c9c;background:#efefef;font-size:11px;line-height:13.500px;text-align:left;padding-left:3.500px;"></div>
<div class="a" style="left:378.5px;top:547.500px;width:32.0px;height:14px;border:1px solid #b4b4b4;border-top-color:#8c8c8c;border-left-color:#9c9c9c;background:#efefef;font-size:11px;line-height:13.500px;text-align:center;">STD</div>
<div class="a" style="left:414px;top:547.500px;width:21.5px;height:14px;border:1px solid #b4b4b4;border-top-color:#8c8c8c;border-left-color:#9c9c9c;background:#efefef;font-size:11px;line-height:13.500px;text-align:center;">*</div>
<div class="a" style="left:437.7px;top:547.500px;width:19.30000000000001px;height:14px;border:1px solid #b4b4b4;border-top-color:#8c8c8c;border-left-color:#9c9c9c;background:#efefef;font-size:11px;line-height:13.500px;text-align:left;padding-left:3.500px;"></div>
<div class="a" style="left:460.2px;top:547.500px;width:241.8px;height:14px;border:1px solid #b4b4b4;border-top-color:#8c8c8c;border-left-color:#9c9c9c;background:#efefef;font-size:11px;line-height:13.500px;text-align:left;padding-left:3.500px;"></div>
<div class="a" style="left:563px;top:548.500px;font-size:11px;line-height:13.500px">Sum=0</div>
<svg class="a" style="left:695px;top:552px" width="11" height="11" viewBox="0 0 11 11"><path d="M10 1L1 10M10 4.500L4.500 10M10 8L8 10" stroke="#999" stroke-width=".8"/></svg>
</div></div>
<div id="dlg">
<div id="dtitle">Text to Columns</div>
<div class="tlr" style="left:6px;top:3.500px"></div><div class="tlg" style="left:21.500px;top:3.500px"></div><div class="tlg" style="left:37px;top:3.500px"></div>
<div class="lb " style="left:12px;top:21.80000000000001px">Import</div>
<div class="sep" style="left:49px;top:27.500px;width:432px"></div>
<div class="lb dis" style="left:23px;top:42.5px">Character set</div>
<div class="pop" style="left:146px;top:42.500px;width:235px">Unicode<i></i><b class="u"></b><b class="d"></b></div>
<div class="lb dis" style="left:23px;top:67.5px">From row</div>
<div class="ibox" style="left:147px;top:65px;width:36px;height:18px;line-height:16px;padding-left:2px;color:#aaa;border-color:#e0e0e0;border-top-color:#c8c8c8;box-shadow:none">1</div>
<div class="a" style="left:186.500px;top:65px;width:10.500px;height:17px;border:1px solid #555;border-radius:4px;background:linear-gradient(180deg,#fff,#e4e4e4)"></div>
<svg class="a" style="left:186.500px;top:64px" width="11" height="19" viewBox="0 0 11 19"><path d="M5.300 4.500l-2 2.700h4zM5.300 14.500l-2-2.700h4z" fill="#222"/></svg>
<div class="lb " style="left:12px;top:92px">Separator options</div>
<div class="sep" style="left:102px;top:97.500px;width:379px"></div>
<div class="rad" style="left:23.500px;top:112px"></div>
<div class="lb " style="left:39.5px;top:110.5px">Fixed width</div>
<div class="rad" style="left:23.500px;top:134.500px;border-color:#2a4f9f;background:radial-gradient(circle at 50% 50%,#0a0a1a 0,#10142a 18%,#8fc2f7 34%,#5a9bec 60%,#2d68cf 100%)"></div>
<div class="lb " style="left:39.5px;top:133px">Separated by</div>
<div class="chk" style="left:40px;top:155.5px"></div>
<div class="lb " style="left:55.5px;top:153.60000000000002px">Tab</div>
<div class="chk" style="left:174px;top:155.5px"></div>
<div class="lb " style="left:189.5px;top:153.60000000000002px">Comma</div>
<div class="chk" style="left:308px;top:155.5px"></div>
<div class="lb " style="left:323.5px;top:153.60000000000002px">Other</div>
<div class="ibox" style="left:408.500px;top:150px;width:65px;height:17.500px"></div>
<div class="a" style="left:38px;top:173px;width:14px;height:14px;border-radius:4px;background:#6aa4ec;box-shadow:0 0 1.500px #4c8ade"></div>
<div class="chk" style="left:40px;top:175px;border-color:#3868b8;background:linear-gradient(180deg,#e6f1fd,#86b9f4)"></div>
<svg class="a" style="left:40px;top:172.5px" width="13" height="13" viewBox="0 0 13 13"><path d="M2.500 6.500l2.500 3.500 5-8.500" fill="none" stroke="#0a0a18" stroke-width="1.700"/></svg>
<div class="lb " style="left:55.5px;top:173.60000000000002px">Semicolon</div>
<div class="chk" style="left:174px;top:175px"></div>
<div class="lb " style="left:189.5px;top:173.60000000000002px">Space</div>
<div class="chk" style="left:40px;top:198.60000000000002px"></div>
<div class="lb " style="left:55.5px;top:196.7px">Merge delimiters</div>
<div class="lb " style="left:291.5px;top:196.2px">Text delimiter</div>
<div class="ibox" style="left:409px;top:195px;width:53px;height:16px;line-height:15px;font-size:9px;font-family:'Liberation Sans',sans-serif">"</div><div class="cb" style="left:460.300px;top:195px;height:16px"></div>
<div class="lb " style="left:12px;top:224px">Fields</div>
<div class="sep" style="left:44px;top:229.500px;width:437px"></div>
<div class="lb dis" style="left:23px;top:244.5px">Column type</div>
<div class="pop" style="left:146px;top:244px;width:105px"><i></i><b class="u"></b><b class="d"></b></div>
<div id="pv"><div id="pvg"></div>
<div class="a" style="left:0;top:113px;width:450px;height:12.500px;background:linear-gradient(180deg,#b4b4b4 0,#e6e6e6 18%,#fbfbfb 45%,#fdfdfd 100%)"></div>
<div class="a" style="left:439px;top:0;width:11px;height:114px;background:linear-gradient(90deg,#b0b0b0 0,#e4e4e4 18%,#fbfbfb 45%,#f6f6f6 100%)"></div>
<div class="a" style="left:439.500px;top:114px;width:10.500px;height:11.500px;background:#eeeeee"></div>
<div class="a" style="left:0;top:0;width:198px;height:90px;background:#fff"></div>
<div class="a" style="left:0;top:0;width:198px;height:13px;background:linear-gradient(180deg,#f8f8f8,#e9e9e9)"></div>
<div class="a" style="left:0;top:0;width:20px;height:89px;background:linear-gradient(180deg,#f6f6f6,#ebebeb)"></div>
<div class="a" style="left:0;top:13px;width:198px;height:1px;background:#9e9e9e"></div>
<div class="a" style="left:0;top:13px;width:20px;height:1px;background:#a4a4a4"></div>
<div class="a" style="left:0;top:26px;width:198px;height:1px;background:#c6c6c6"></div>
<div class="a" style="left:0;top:26px;width:20px;height:1px;background:#a4a4a4"></div>
<div class="a" style="left:0;top:38px;width:198px;height:1px;background:#c6c6c6"></div>
<div class="a" style="left:0;top:38px;width:20px;height:1px;background:#a4a4a4"></div>
<div class="a" style="left:0;top:51px;width:198px;height:1px;background:#c6c6c6"></div>
<div class="a" style="left:0;top:51px;width:20px;height:1px;background:#a4a4a4"></div>
<div class="a" style="left:0;top:64px;width:198px;height:1px;background:#c6c6c6"></div>
<div class="a" style="left:0;top:64px;width:20px;height:1px;background:#a4a4a4"></div>
<div class="a" style="left:0;top:76px;width:198px;height:1px;background:#c6c6c6"></div>
<div class="a" style="left:0;top:76px;width:20px;height:1px;background:#a4a4a4"></div>
<div class="a" style="left:0;top:89px;width:198px;height:1px;background:#c6c6c6"></div>
<div class="a" style="left:0;top:89px;width:20px;height:1px;background:#a4a4a4"></div>
<div class="a" style="left:20px;top:0;width:1px;height:90px;background:#c6c6c6"></div>
<div class="a" style="left:20px;top:0;width:1px;height:13px;background:#9a9a9a"></div>
<div class="a" style="left:79px;top:0;width:1px;height:90px;background:#c6c6c6"></div>
<div class="a" style="left:79px;top:0;width:1px;height:13px;background:#9a9a9a"></div>
<div class="a" style="left:150px;top:0;width:1px;height:90px;background:#c6c6c6"></div>
<div class="a" style="left:150px;top:0;width:1px;height:13px;background:#9a9a9a"></div>
<div class="a" style="left:197px;top:0;width:1px;height:90px;background:#c6c6c6"></div>
<div class="a" style="left:197px;top:0;width:1px;height:13px;background:#9a9a9a"></div>
<div class="a" style="left:20px;top:0;width:1px;height:90px;background:#a4a4a4"></div>
<div class="a" style="left:22px;top:1px;font-size:10.500px;line-height:13px;color:#000">Standard</div>
<div class="a" style="left:81px;top:1px;font-size:10.500px;line-height:13px;color:#000">Standard</div>
<div class="a" style="left:152px;top:1px;font-size:10.500px;line-height:13px;color:#000">Standard</div>
<div class="a" style="left:0;top:13.5px;width:20px;text-align:center;font-size:10.500px;line-height:12px;color:#000">1</div>
<div class="a" style="left:22px;top:13.8px;font-family:'Liberation Mono',monospace;font-size:10.100px;line-height:12px;color:#4a4a4a">Last Name</div>
<div class="a" style="left:86px;top:13.8px;font-family:'Liberation Mono',monospace;font-size:10.100px;line-height:12px;color:#4a4a4a">First Name</div>
<div class="a" style="left:157px;top:13.8px;font-family:'Liberation Mono',monospace;font-size:10.100px;line-height:12px;color:#4a4a4a">Age</div>
<div class="a" style="left:0;top:26.5px;width:20px;text-align:center;font-size:10.500px;line-height:12px;color:#000">2</div>
<div class="a" style="left:22px;top:26.8px;font-family:'Liberation Mono',monospace;font-size:10.100px;line-height:12px;color:#4a4a4a">Miller</div>
<div class="a" style="left:86px;top:26.8px;font-family:'Liberation Mono',monospace;font-size:10.100px;line-height:12px;color:#4a4a4a">John</div>
<div class="a" style="left:157px;top:26.8px;font-family:'Liberation Mono',monospace;font-size:10.100px;line-height:12px;color:#4a4a4a">35</div>
<div class="a" style="left:0;top:38.5px;width:20px;text-align:center;font-size:10.500px;line-height:12px;color:#000">3</div>
<div class="a" style="left:22px;top:38.8px;font-family:'Liberation Mono',monospace;font-size:10.100px;line-height:12px;color:#4a4a4a">Clark</div>
<div class="a" style="left:86px;top:38.8px;font-family:'Liberation Mono',monospace;font-size:10.100px;line-height:12px;color:#4a4a4a">James</div>
<div class="a" style="left:157px;top:38.8px;font-family:'Liberation Mono',monospace;font-size:10.100px;line-height:12px;color:#4a4a4a">42</div>
<div class="a" style="left:0;top:51.5px;width:20px;text-align:center;font-size:10.500px;line-height:12px;color:#000">4</div>
<div class="a" style="left:22px;top:51.8px;font-family:'Liberation Mono',monospace;font-size:10.100px;line-height:12px;color:#4a4a4a">Sands</div>
<div class="a" style="left:86px;top:51.8px;font-family:'Liberation Mono',monospace;font-size:10.100px;line-height:12px;color:#4a4a4a">Peter</div>
<div class="a" style="left:157px;top:51.8px;font-family:'Liberation Mono',monospace;font-size:10.100px;line-height:12px;color:#4a4a4a">24</div>
<div class="a" style="left:0;top:64.5px;width:20px;text-align:center;font-size:10.500px;line-height:12px;color:#000">5</div>
<div class="a" style="left:22px;top:64.8px;font-family:'Liberation Mono',monospace;font-size:10.100px;line-height:12px;color:#4a4a4a">McDonald</div>
<div class="a" style="left:86px;top:64.8px;font-family:'Liberation Mono',monospace;font-size:10.100px;line-height:12px;color:#4a4a4a">Liz</div>
<div class="a" style="left:157px;top:64.8px;font-family:'Liberation Mono',monospace;font-size:10.100px;line-height:12px;color:#4a4a4a">25</div>
<div class="a" style="left:0;top:76.5px;width:20px;text-align:center;font-size:10.500px;line-height:12px;color:#000">6</div>
<div class="a" style="left:22px;top:76.8px;font-family:'Liberation Mono',monospace;font-size:10.100px;line-height:12px;color:#4a4a4a">Berger</div>
<div class="a" style="left:86px;top:76.8px;font-family:'Liberation Mono',monospace;font-size:10.100px;line-height:12px;color:#4a4a4a">Susy</div>
<div class="a" style="left:157px;top:76.8px;font-family:'Liberation Mono',monospace;font-size:10.100px;line-height:12px;color:#4a4a4a">41</div>
</div>
<div class="btn" style="top:26px">OK</div><div class="btn" style="top:53px">Cancel</div><div class="btn" style="top:84px">Help</div>
</div>
</body>
</html>
